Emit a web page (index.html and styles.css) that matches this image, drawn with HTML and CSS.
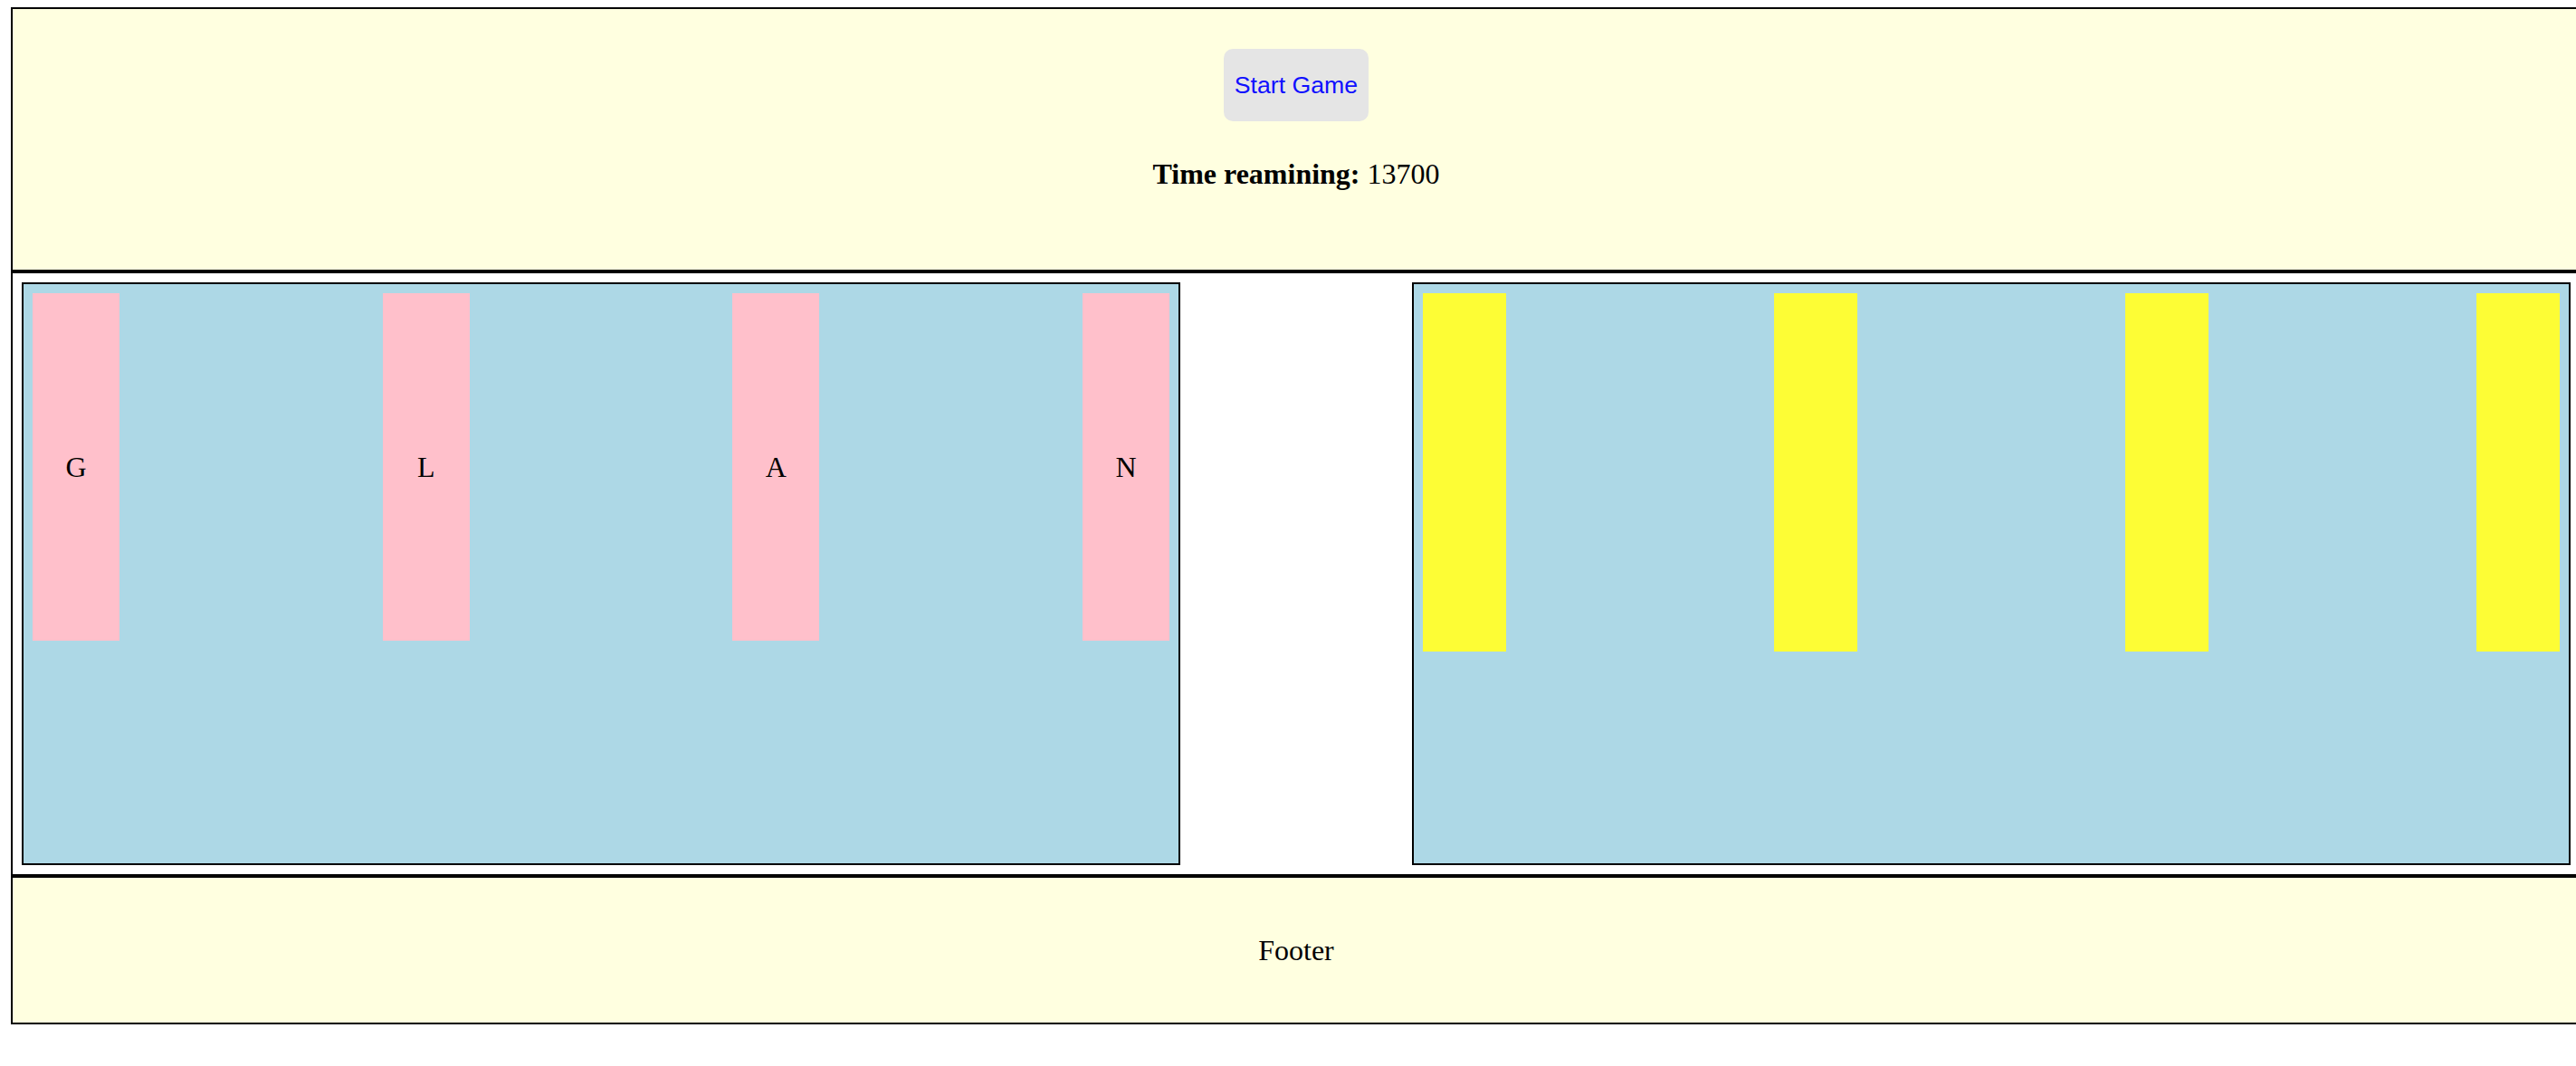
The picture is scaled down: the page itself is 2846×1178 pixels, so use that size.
FILE: index.html
```html
<!DOCTYPE html>
<html>
<head>
<meta charset="utf-8">
<title>Game</title>
<link rel="stylesheet" href="styles.css">
</head>
<body>
<div class="page">
  <header class="header">
    <button class="start-btn">Start Game</button>
    <p class="timer"><b>Time reamining:</b> 13700</p>
  </header>
  <main class="main">
    <div class="panel">
      <div class="card card-pink">G</div>
      <div class="card card-pink">L</div>
      <div class="card card-pink">A</div>
      <div class="card card-pink">N</div>
    </div>
    <div class="panel">
      <div class="card card-yellow"></div>
      <div class="card card-yellow"></div>
      <div class="card card-yellow"></div>
      <div class="card card-yellow"></div>
    </div>
  </main>
  <footer class="footer">Footer</footer>
</div>
</body>
</html>
```

FILE: styles.css
```css
html, body {
  overflow-x: hidden;
}
body {
  margin: 8px 0 8px 12px;
  font-family: "Liberation Serif", "Times New Roman", serif;
  font-size: 32px;
  color: #000;
  background: #fff;
}
.page {
  width: 2840px;
}
.header {
  box-sizing: border-box;
  height: 292px;
  border: 2px solid #000;
  background: #ffffe0;
  display: flex;
  flex-direction: column;
  align-items: center;
  padding-top: 44px;
}
.start-btn {
  width: 160px;
  height: 80px;
  border: none;
  border-radius: 10px;
  background: #e5e5e5;
  color: #1010ff;
  font-family: "Liberation Sans", Arial, sans-serif;
  font-size: 26.67px;
  padding: 0;
}
.timer {
  margin: 40px 0 0;
  line-height: 36px;
}
.main {
  box-sizing: border-box;
  height: 668px;
  border: 2px solid #000;
  border-top: 0;
  border-top: 2px solid #000;
  padding: 10px;
  display: flex;
  justify-content: space-between;
  align-items: flex-start;
  background: #fff;
}
.panel {
  box-sizing: border-box;
  width: 1280px;
  height: 644px;
  border: 2px solid #000;
  background: #add8e6;
  padding: 10px;
  display: flex;
  justify-content: space-between;
  align-items: flex-start;
}
.card {
  display: flex;
  align-items: center;
  justify-content: center;
  line-height: 36px;
}
.card-pink {
  width: 96px;
  height: 384px;
  background: #ffc0cb;
}
.card-yellow {
  width: 92px;
  height: 396px;
  background: #fdfd35;
}
.footer {
  box-sizing: border-box;
  height: 164px;
  border: 2px solid #000;
  background: #ffffe0;
  display: flex;
  align-items: center;
  justify-content: center;
  line-height: 36px;
}
```
